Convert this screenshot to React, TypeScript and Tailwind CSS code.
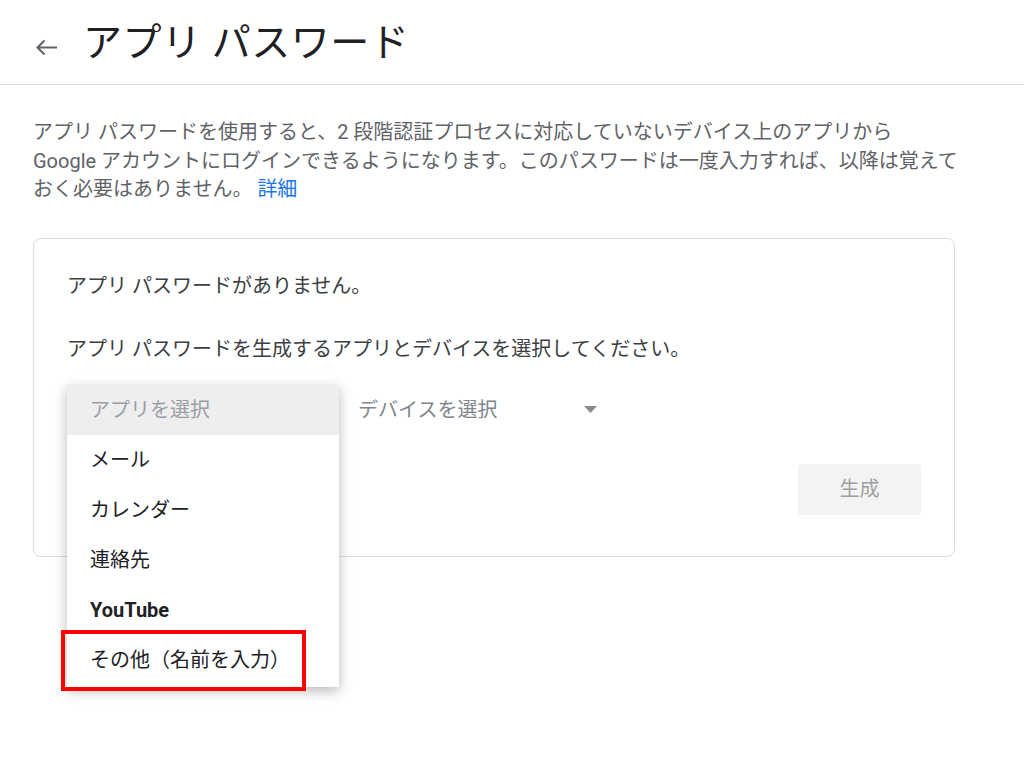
const font = { fontFamily: 'Roboto, "Noto Sans CJK JP", sans-serif' };

const menuItems = ["メール", "カレンダー", "連絡先", "YouTube", "その他（名前を入力）"];

export default function App() {
  return (
    <div className="min-h-screen w-full bg-white text-[#202124]" style={font}>
      <header className="flex h-[85px] items-center border-b border-[#dadce0]">
        <svg className="ml-[35px] mt-[10px] h-[17px] w-[22px]" viewBox="0 0 22 17" fill="none" stroke="#5f6368" strokeWidth="2">
          <path d="M22 8.5H2.5M9.5 1.5L2.5 8.5L9.5 15.5" />
        </svg>
        <h1 className="ml-[26px] mt-[2px] text-[39px] font-normal leading-none tracking-[0.5px] text-[#202124]">
          アプリ パスワード
        </h1>
      </header>

      <main className="px-[33px] pt-[33px]">
        <p className="w-[940px] text-[20px] leading-[28.5px] text-[#5f6368]">
          アプリ パスワードを使用すると、2 段階認証プロセスに対応していないデバイス上のアプリから
          <br />
          Google アカウントにログインできるようになります。このパスワードは一度入力すれば、以降は覚えて
          <br />
          おく必要はありません。 <span className="text-[#1a73e8]">詳細</span>
        </p>

        <section className="mt-[34px] w-[922px] rounded-[8px] border border-[#dadce0] px-[33px] pb-[41px] pt-[34px] text-[20px] text-[#3c4043]">
          <p className="leading-[26px]">アプリ パスワードがありません。</p>
          <p className="mt-[37px] leading-[26px]">アプリ パスワードを生成するアプリとデバイスを選択してください。</p>

          <div className="relative mt-[23px] flex h-[50px] items-center">
            <div className="w-[268px]" />
            <div className="flex w-[272px] items-center justify-between pl-[23px] pr-[10px] text-[#80868b]">
              <span>デバイスを選択</span>
              <svg className="h-[7px] w-[13px]" viewBox="0 0 13 7">
                <path d="M0 0H13L6.5 7Z" fill="#8a8a8a" />
              </svg>
            </div>

            <div className="absolute left-0 top-0 z-10 w-[272px] bg-white shadow-[0_4px_12px_rgba(0,0,0,0.28)]">
              <div className="flex h-[50px] items-center bg-[#eeeeee] pl-[23px] text-[#9aa0a6]">アプリを選択</div>
              {menuItems.map((item) => (
                <div
                  key={item}
                  className={`flex h-[50px] items-center pl-[23px] text-[#202124] ${item === "YouTube" ? "font-bold" : ""}`}
                >
                  {item}
                </div>
              ))}
              <div className="h-[2px]" />
              <div className="pointer-events-none absolute bottom-[-4px] left-[-6px] h-[61px] w-[245px] border-[4px] border-[#ff0000]" />
            </div>
          </div>

          <div className="mt-[29px] flex justify-end">
            <button className="h-[51px] w-[123px] rounded-[4px] bg-[#f3f3f3] text-[20px] text-[#a0a0a0]">生成</button>
          </div>
        </section>
      </main>
    </div>
  );
}
